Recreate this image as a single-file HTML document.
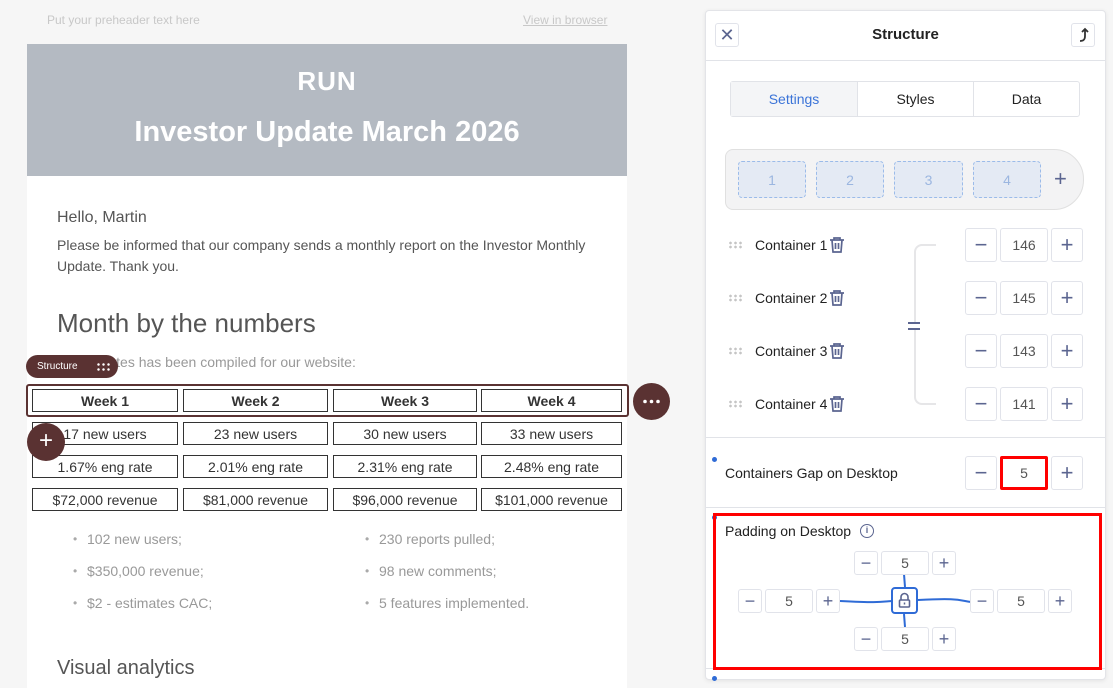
<!DOCTYPE html>
<html><head><meta charset="utf-8"><style>
*{box-sizing:border-box;margin:0;padding:0}
body{width:1113px;height:688px;overflow:hidden;background:#f6f6f6;font-family:"Liberation Sans",sans-serif;position:relative}
.a{position:absolute}
.b{position:absolute;border:1px solid #e1e3ea;background:#fff;border-radius:3px;display:flex;align-items:center;justify-content:center;color:#5b6590;font-size:22px}
.v{color:#555;font-size:14px}
.cell{position:absolute;border:1px solid #333;background:#fff;display:flex;align-items:center;justify-content:center;font-size:14px;color:#333}
.li{position:absolute;font-size:14px;color:#999}
.li:before{content:"•";position:absolute;left:-14px;color:#aaa;font-size:12px;top:1px}
.cl{position:absolute;left:755px;font-size:14px;color:#222}
.dots{position:absolute;left:728px;width:14px;height:8px;background:radial-gradient(circle,#c5c5c5 1.2px,transparent 1.5px) 0 0/5px 4px}
</style></head><body>
<div class="a" style="left:47px;top:13px;font-size:12px;color:#c8c8c8">Put your preheader text here</div>
<div class="a" style="left:523px;top:13px;font-size:12px;color:#c8c8c8;text-decoration:underline">View in browser</div>
<div class="a" style="left:27px;top:44px;width:600px;height:644px;background:#fff"></div>
<div class="a" style="left:27px;top:44px;width:600px;height:132px;background:#b4bac2"></div>
<div class="a" style="left:27px;top:66px;width:600px;text-align:center;color:#fff;font-size:26px;font-weight:bold;letter-spacing:1px">RUN</div>
<div class="a" style="left:27px;top:116px;width:600px;text-align:center;color:#fff;font-size:29px;font-weight:bold">Investor Update March 2026</div>
<div class="a" style="left:57px;top:209px;font-size:16px;color:#555">Hello, Martin</div>
<div class="a" style="left:57px;top:235px;width:540px;font-size:14px;line-height:21px;color:#555">Please be informed that our company sends a monthly report on the Investor Monthly Update. Thank you.</div>
<div class="a" style="left:57px;top:308px;font-size:26px;color:#555">Month by the numbers</div>
<div class="a" style="left:57px;top:354px;font-size:14px;color:#999">The updates has been compiled for our website:</div>
<div class="a" style="left:26px;top:355px;width:92px;height:23px;background:#5a3232;border-radius:12px;color:#fff;font-size:10px;padding:6px 0 0 11px">Structure</div>
<div class="a" style="left:96px;top:362px;width:14px;height:9px;background:radial-gradient(circle,#fff 1.1px,transparent 1.4px) 0 0/5px 5px"></div>
<div class="a" style="left:26px;top:384px;width:603px;height:33px;border:2px solid #5a3232;border-radius:3px"></div>
<div class="cell" style="left:32px;top:389px;width:146px;height:23px;font-weight:bold">Week 1</div>
<div class="cell" style="left:183px;top:389px;width:145px;height:23px;font-weight:bold">Week 2</div>
<div class="cell" style="left:333px;top:389px;width:144px;height:23px;font-weight:bold">Week 3</div>
<div class="cell" style="left:481px;top:389px;width:141px;height:23px;font-weight:bold">Week 4</div>
<div class="cell" style="left:32px;top:422px;width:146px;height:23px">17 new users</div>
<div class="cell" style="left:183px;top:422px;width:145px;height:23px">23 new users</div>
<div class="cell" style="left:333px;top:422px;width:144px;height:23px">30 new users</div>
<div class="cell" style="left:481px;top:422px;width:141px;height:23px">33 new users</div>
<div class="cell" style="left:32px;top:455px;width:146px;height:23px">1.67% eng rate</div>
<div class="cell" style="left:183px;top:455px;width:145px;height:23px">2.01% eng rate</div>
<div class="cell" style="left:333px;top:455px;width:144px;height:23px">2.31% eng rate</div>
<div class="cell" style="left:481px;top:455px;width:141px;height:23px">2.48% eng rate</div>
<div class="cell" style="left:32px;top:488px;width:146px;height:23px">$72,000 revenue</div>
<div class="cell" style="left:183px;top:488px;width:145px;height:23px">$81,000 revenue</div>
<div class="cell" style="left:333px;top:488px;width:144px;height:23px">$96,000 revenue</div>
<div class="cell" style="left:481px;top:488px;width:141px;height:23px">$101,000 revenue</div>
<div class="a" style="left:633px;top:383px;width:37px;height:37px;border-radius:50%;background:#5a3232"><svg width="37" height="37"><circle cx="12" cy="18.5" r="1.8" fill="#fff"/><circle cx="18.5" cy="18.5" r="1.8" fill="#fff"/><circle cx="25" cy="18.5" r="1.8" fill="#fff"/></svg></div>
<div class="a" style="left:27px;top:423px;width:38px;height:38px;border-radius:50%;background:#5a3232;color:#fff;text-align:center;font-size:24px;line-height:36px">+</div>
<div class="li" style="left:87px;top:531px">102 new users;</div>
<div class="li" style="left:87px;top:563px">$350,000 revenue;</div>
<div class="li" style="left:87px;top:595px">$2 - estimates CAC;</div>
<div class="li" style="left:379px;top:531px">230 reports pulled;</div>
<div class="li" style="left:379px;top:563px">98 new comments;</div>
<div class="li" style="left:379px;top:595px">5 features implemented.</div>
<div class="a" style="left:57px;top:657px;font-size:20px;color:#555">Visual analytics</div>

<!-- panel -->
<div class="a" style="left:705px;top:10px;width:401px;height:670px;background:#fff;border:1px solid #e3e4e8;border-radius:4px;box-shadow:0 1px 4px rgba(0,0,0,.08)"></div>
<div class="b" style="left:715px;top:23px;width:24px;height:24px;font-size:18px">✕</div>
<div class="a" style="left:705px;top:26px;width:401px;text-align:center;font-size:15px;font-weight:bold;color:#222">Structure</div>
<div class="b" style="left:1071px;top:23px;width:24px;height:24px"><svg width="14" height="16" viewBox="0 0 14 16"><path d="M4 14c4 0 5-2 5-5V3M6 5l3-3 3 3" stroke="#333" stroke-width="1.8" fill="none"/></svg></div>
<div class="a" style="left:706px;top:60px;width:399px;height:1px;background:#e1e3e8"></div>
<div class="a" style="left:730px;top:81px;width:350px;height:36px;border:1px solid #e1e3e8;border-radius:3px;display:flex;font-size:14px;color:#222">
<div style="width:127px;background:#f4f5f7;color:#3b74d8;display:flex;align-items:center;justify-content:center;border-right:1px solid #e1e3e8">Settings</div>
<div style="width:116px;display:flex;align-items:center;justify-content:center;border-right:1px solid #e1e3e8">Styles</div>
<div style="flex:1;display:flex;align-items:center;justify-content:center">Data</div></div>
<div class="a" style="left:725px;top:149px;width:359px;height:61px;background:#f3f3f4;border:1px solid #e0e0e0;border-radius:8px 30px 30px 8px"></div>
<div class="a" style="left:738px;top:161px;width:68px;height:37px;border:1px dashed #9bbbe9;background:#e4eaf4;border-radius:4px;color:#9bb6e0;font-size:14px;display:flex;align-items:center;justify-content:center">1</div>
<div class="a" style="left:816px;top:161px;width:68px;height:37px;border:1px dashed #9bbbe9;background:#e4eaf4;border-radius:4px;color:#9bb6e0;font-size:14px;display:flex;align-items:center;justify-content:center">2</div>
<div class="a" style="left:894px;top:161px;width:69px;height:37px;border:1px dashed #9bbbe9;background:#e4eaf4;border-radius:4px;color:#9bb6e0;font-size:14px;display:flex;align-items:center;justify-content:center">3</div>
<div class="a" style="left:973px;top:161px;width:68px;height:37px;border:1px dashed #9bbbe9;background:#e4eaf4;border-radius:4px;color:#9bb6e0;font-size:14px;display:flex;align-items:center;justify-content:center">4</div>
<div class="a" style="left:1054px;top:166px;font-size:22px;color:#5b6590">+</div>

<div class="dots" style="top:241px"></div><div class="cl" style="top:237px">Container 1</div>
<div class="dots" style="top:294px"></div><div class="cl" style="top:290px">Container 2</div>
<div class="dots" style="top:347px"></div><div class="cl" style="top:343px">Container 3</div>
<div class="dots" style="top:400px"></div><div class="cl" style="top:396px">Container 4</div>
<svg class="a" style="left:828px;top:235px" width="18" height="190" fill="none" stroke="#5b6590" stroke-width="1.7">
<g id="t"><path d="M2 5h14M6 5V3h6v2M4 5l1 12h8l1-12M7.5 8v6M10.5 8v6"/></g>
<use href="#t" y="53"/><use href="#t" y="106"/><use href="#t" y="159"/></svg>
<div class="a" style="left:914px;top:244px;width:22px;height:161px;border:2px solid #e6e6e8;border-right:none;border-radius:8px 0 0 8px"></div>
<div class="a" style="left:908px;top:322px;width:12px;height:8px;border-top:2px solid #5b6590;border-bottom:2px solid #5b6590;background:#fff"></div>

<div class="b" style="left:965px;top:228px;width:32px;height:34px">−</div><div class="b v" style="left:1000px;top:228px;width:48px;height:34px">146</div><div class="b" style="left:1051px;top:228px;width:32px;height:34px">+</div>
<div class="b" style="left:965px;top:281px;width:32px;height:34px">−</div><div class="b v" style="left:1000px;top:281px;width:48px;height:34px">145</div><div class="b" style="left:1051px;top:281px;width:32px;height:34px">+</div>
<div class="b" style="left:965px;top:334px;width:32px;height:34px">−</div><div class="b v" style="left:1000px;top:334px;width:48px;height:34px">143</div><div class="b" style="left:1051px;top:334px;width:32px;height:34px">+</div>
<div class="b" style="left:965px;top:387px;width:32px;height:34px">−</div><div class="b v" style="left:1000px;top:387px;width:48px;height:34px">141</div><div class="b" style="left:1051px;top:387px;width:32px;height:34px">+</div>

<div class="a" style="left:706px;top:437px;width:399px;height:1px;background:#e1e3e8"></div>
<div class="a" style="left:712px;top:457px;width:5px;height:5px;border-radius:50%;background:#2f6bd6"></div>
<div class="a" style="left:725px;top:465px;font-size:14px;color:#222">Containers Gap on Desktop</div>
<div class="b" style="left:965px;top:456px;width:32px;height:34px">−</div><div class="b v" style="left:1000px;top:456px;width:48px;height:34px;border:3px solid #f00;border-radius:2px">5</div><div class="b" style="left:1051px;top:456px;width:32px;height:34px">+</div>
<div class="a" style="left:706px;top:507px;width:399px;height:1px;background:#e1e3e8"></div>
<div class="a" style="left:712px;top:515px;width:5px;height:5px;border-radius:50%;background:#2f6bd6"></div>
<div class="a" style="left:712px;top:676px;width:5px;height:5px;border-radius:50%;background:#2f6bd6"></div>
<div class="a" style="left:706px;top:668px;width:399px;height:1px;background:#e1e3e8"></div>
<div class="a" style="left:713px;top:513px;width:389px;height:157px;border:3px solid #f00"></div>
<div class="a" style="left:725px;top:523px;font-size:14px;color:#222">Padding on Desktop</div>
<div class="a" style="left:860px;top:524px;width:14px;height:14px;border:1.5px solid #5b6590;border-radius:50%;color:#5b6590;font-size:9px;text-align:center;line-height:11px;font-weight:bold">i</div>
<svg class="a" style="left:700px;top:570px" width="400" height="60" fill="none" stroke="#2f6bd6" stroke-width="2"><path d="M140 31c40 2 40 1 52 0M218 30c40-2 40 0 53 2M204 4l1 13M204 44l1 13"/></svg>
<div class="a" style="left:891px;top:587px;width:27px;height:27px;border:2px solid #2f6bd6;border-radius:4px;background:#fff"><svg width="23" height="23" viewBox="0 0 23 23" style="display:block"><path d="M8 11V8a3.5 3.5 0 017 0v3" stroke="#5b6590" stroke-width="1.6" fill="none"/><rect x="6.5" y="11" width="10" height="7" rx="1" stroke="#5b6590" stroke-width="1.6" fill="none"/><path d="M11.5 13.5v2" stroke="#5b6590" stroke-width="1.5"/></svg></div>
<div class="b" style="left:854px;top:551px;width:24px;height:24px;font-size:18px">−</div><div class="b v" style="left:881px;top:551px;width:48px;height:24px">5</div><div class="b" style="left:932px;top:551px;width:24px;height:24px;font-size:18px">+</div>
<div class="b" style="left:854px;top:627px;width:24px;height:24px;font-size:18px">−</div><div class="b v" style="left:881px;top:627px;width:48px;height:24px">5</div><div class="b" style="left:932px;top:627px;width:24px;height:24px;font-size:18px">+</div>
<div class="b" style="left:738px;top:589px;width:24px;height:24px;font-size:18px">−</div><div class="b v" style="left:765px;top:589px;width:48px;height:24px">5</div><div class="b" style="left:816px;top:589px;width:24px;height:24px;font-size:18px">+</div>
<div class="b" style="left:970px;top:589px;width:24px;height:24px;font-size:18px">−</div><div class="b v" style="left:997px;top:589px;width:48px;height:24px">5</div><div class="b" style="left:1048px;top:589px;width:24px;height:24px;font-size:18px">+</div>
</body></html>
